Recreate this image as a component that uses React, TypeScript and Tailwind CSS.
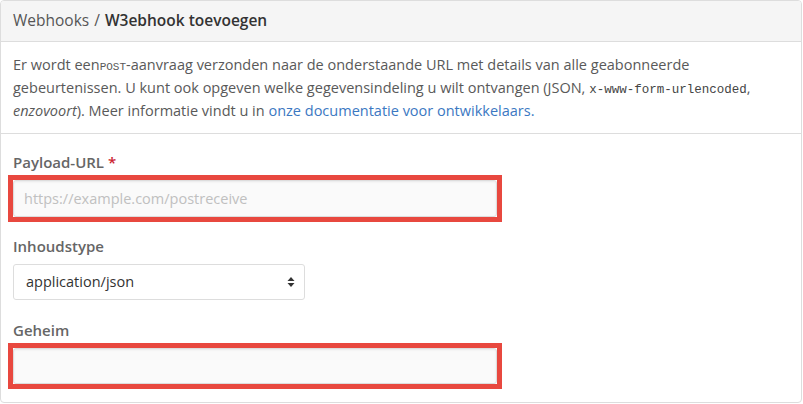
import React from 'react';

const font = { fontFamily: '"Open Sans", "Noto Sans", sans-serif' };

export default function App() {
  return (
    <div className="w-[803px] h-[404px] bg-white" style={font}>
      <div className="w-[802px] h-[403px] border border-[#dddddd] rounded-[4px] overflow-hidden">
        {/* Header */}
        <div className="h-[41px] bg-[#f5f5f5] border-b border-[#dddddd] flex items-center px-3 text-[15.5px] text-[#555555]">
          <span>Webhooks</span>
          <span className="mx-[5px]">/</span>
          <span className="font-semibold text-[#333333]">W3ebhook toevoegen</span>
        </div>

        {/* Description */}
        <div className="border-b border-[#dddddd] px-3 pt-[11px] pb-[11px] text-[14.5px] leading-[23px] text-[#595959]">
          Er wordt een<code className="font-mono text-[11px] leading-none uppercase">post</code>-aanvraag verzonden naar de onderstaande URL met details van alle geabonneerde
          gebeurtenissen. U kunt ook opgeven welke gegevensindeling u wilt ontvangen (JSON,{' '}
          <code className="font-mono text-[12.5px] leading-none text-[#444]">x-www-form-urlencoded</code>,{' '}
          <em>enzovoort</em>). Meer informatie vindt u in{' '}
          <a href="#" className="text-[#3b78c2]">onze documentatie voor ontwikkelaars.</a>
        </div>

        {/* Form */}
        <div className="px-3 pt-[18px]">
          <label className="block text-[15px] leading-5 font-semibold text-[#666666]">
            Payload-URL <span className="text-[#cb2431]">*</span>
          </label>
          <div className="mt-[3px] -mx-[5px] w-[494px] border-[5px] border-[#e8483f]">
            <input
              type="text"
              placeholder="https://example.com/postreceive"
              className="block w-full h-[37px] px-[10px] bg-[#fafafa] border border-[#dddddd] rounded-[3px] text-[14.5px] text-[#333] placeholder:text-[#c0c0c0] outline-none shadow-[inset_0_1px_2px_rgba(27,31,35,0.075)]"
            />
          </div>

          <label className="block mt-[14px] text-[15px] leading-5 font-semibold text-[#666666]">
            Inhoudstype
          </label>
          <div className="mt-2 w-[292px] h-[36px] border border-[#dddddd] rounded-[3px] bg-white flex items-center justify-between pl-3 pr-[9px] text-[14.5px] text-[#333333]">
            <span>application/json</span>
            <svg width="8" height="12" viewBox="0 0 8 12" fill="#333">
              <path d="M4 1 L7.5 5 H0.5 Z" />
              <path d="M4 11 L7.5 7 H0.5 Z" />
            </svg>
          </div>

          <label className="block mt-[20px] text-[15px] leading-5 font-semibold text-[#666666]">
            Geheim
          </label>
          <div className="mt-[3px] -mx-[5px] w-[494px] border-[5px] border-[#e8483f]">
            <input
              type="password"
              className="block w-full h-[36px] px-[10px] bg-[#fafafa] border border-[#dddddd] rounded-[3px] text-[14.5px] outline-none shadow-[inset_0_1px_2px_rgba(27,31,35,0.075)]"
            />
          </div>
        </div>
      </div>
    </div>
  );
}
